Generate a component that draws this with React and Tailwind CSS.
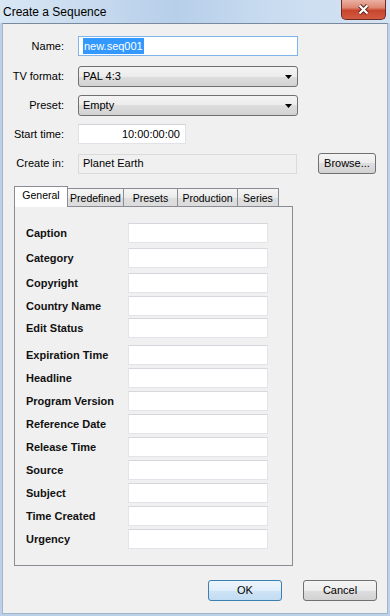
import React from 'react';

const fields = [
  { label: 'Caption', mt: 'mt-0' },
  { label: 'Category', mt: 'mt-[5px]' },
  { label: 'Copyright', mt: 'mt-[5px]' },
  { label: 'Country Name', mt: 'mt-[3px]' },
  { label: 'Edit Status', mt: 'mt-[2px]' },
  { label: 'Expiration Time', mt: 'mt-[7px]' },
  { label: 'Headline', mt: 'mt-[3px]' },
  { label: 'Program Version', mt: 'mt-[3px]' },
  { label: 'Reference Date', mt: 'mt-[3px]' },
  { label: 'Release Time', mt: 'mt-[3px]' },
  { label: 'Source', mt: 'mt-[3px]' },
  { label: 'Subject', mt: 'mt-[3px]' },
  { label: 'Time Created', mt: 'mt-[3px]' },
  { label: 'Urgency', mt: 'mt-[3px]' },
];

const tabs = [
  { name: 'Predefined', w: 'w-[57px]' },
  { name: 'Presets', w: 'w-[55px]' },
  { name: 'Production', w: 'w-[61px]' },
  { name: 'Series', w: 'w-[42px]' },
];

// win7 style gradients
const greyBtn =
  'bg-[linear-gradient(to_bottom,#f4f4f4_0%,#ececec_50%,#dedede_50%,#d2d2d2_100%)] border border-[#707070] rounded-[3px]';

const Arrow = () => (
  <svg width="7" height="4" viewBox="0 0 7 4">
    <path d="M0 0H7L3.5 4Z" fill="#000" />
  </svg>
);

const Combo = ({ value }) => (
  <div className={`ml-[14px] w-[220px] h-[21px] ${greyBtn} flex items-center justify-between pl-[4px] pr-[5px]`}>
    <span>{value}</span>
    <Arrow />
  </div>
);

export default function App() {
  return (
    <div className="w-[390px] h-[616px] flex flex-col bg-[#bcd0e8] font-['Liberation_Sans',Arial,sans-serif] text-[11px] leading-[13px] text-black overflow-hidden">
      {/* title bar */}
      <div className="h-[23px] flex items-start justify-between bg-[linear-gradient(to_right,#d9e7f5_0%,#c6d9ee_25%,#b7cfea_45%,#c9dcf0_70%,#d4e3f3_100%)]">
        <span className="pl-[3px] pt-[5px] text-[12px] leading-[14px]">Create a Sequence</span>
        <div className="mr-[4px] w-[45px] h-[20px] rounded-b-[5px] border border-t-0 border-[#6e2a20] bg-[linear-gradient(to_bottom,#eab0a3_0%,#de8672_40%,#c9452d_55%,#d25a42_100%)] flex items-center justify-center">
          <svg width="13" height="11" viewBox="0 0 13 11">
            <path d="M2.5 1.5L10.5 9.5M10.5 1.5L2.5 9.5" stroke="#5a2017" strokeWidth="4" />
            <path d="M2.5 1.5L10.5 9.5M10.5 1.5L2.5 9.5" stroke="#ffffff" strokeWidth="2.2" />
          </svg>
        </div>
      </div>

      {/* dialog body */}
      <div className="flex-1 mx-[2px] mb-[2px] bg-[#f0f0f0] border border-[#a3b5ca] border-t-[#7a8a9e] flex flex-col">
        <div className="mt-[12px] flex items-center h-[20px]">
          <span className="w-[61px] text-right">Name:</span>
          <div className="ml-[14px] w-[220px] h-[20px] bg-white border border-[#7eb4ea] flex items-center pl-[4px]">
            <span className="bg-[#3399ff] text-white leading-[16px] px-[1px]">new.seq001</span>
          </div>
        </div>

        <div className="mt-[10px] flex items-center h-[21px]">
          <span className="w-[61px] text-right">TV format:</span>
          <Combo value="PAL 4:3" />
        </div>

        <div className="mt-[8px] flex items-center h-[21px]">
          <span className="w-[61px] text-right">Preset:</span>
          <Combo value="Empty" />
        </div>

        <div className="mt-[8px] flex items-center h-[20px]">
          <span className="w-[61px] text-right">Start time:</span>
          <div className="ml-[14px] w-[108px] h-[20px] bg-white border border-[#e0e2e8] border-t-[#d0d2d8] flex items-center justify-end pr-[5px]">
            10:00:00:00
          </div>
        </div>

        <div className="mt-[9px] flex items-center h-[21px]">
          <span className="w-[61px] text-right">Create in:</span>
          <div className="ml-[14px] w-[219px] h-[20px] bg-[#f0f0f0] border border-[#dadada] flex items-center pl-[4px]">
            Planet Earth
          </div>
          <div className={`ml-[21px] w-[58px] h-[21px] ${greyBtn} flex items-center justify-center`}>Browse...</div>
        </div>

        {/* tabs */}
        <div className="mt-[12px] ml-[11px] w-[279px] flex flex-col">
          <div className="relative z-10 h-[20px] flex items-end text-[10.5px]">
            <div className="w-[54px] h-[21px] -mb-px bg-white border border-b-0 border-[#898c95] flex justify-center pt-[2px]">
              General
            </div>
            {tabs.map((t) => (
              <div
                key={t.name}
                className={`${t.w} h-[18px] -ml-px border border-b-0 border-[#898c95] bg-[linear-gradient(to_bottom,#f5f5f5_0%,#ebebeb_50%,#dedede_50%,#dcdcdc_100%)] flex justify-center pt-[3px]`}
              >
                {t.name}
              </div>
            ))}
          </div>

          <div className="border border-[#898c95] bg-[#f0f0f0] pt-[16px] pb-[16px] pl-[11px]">
            {fields.map((f) => (
              <div key={f.label} className={`flex items-center h-[20px] ${f.mt}`}>
                <span className="w-[102px] font-bold text-[#111]">{f.label}</span>
                <div className="w-[140px] h-[20px] bg-white border border-[#e3e4ea] border-t-[#d6d7dd]" />
              </div>
            ))}
          </div>
        </div>

        {/* buttons */}
        <div className="mt-[14px] flex justify-end gap-[21px] pr-[10px]">
          <div className="w-[74px] h-[21px] rounded-[3px] border border-[#3c7fb1] bg-[linear-gradient(to_bottom,#edf5fc_0%,#e0eefa_50%,#cfe4f6_50%,#c2dcf2_100%)] flex items-center justify-center">
            OK
          </div>
          <div className={`w-[74px] h-[21px] ${greyBtn} flex items-center justify-center`}>Cancel</div>
        </div>
      </div>
    </div>
  );
}
